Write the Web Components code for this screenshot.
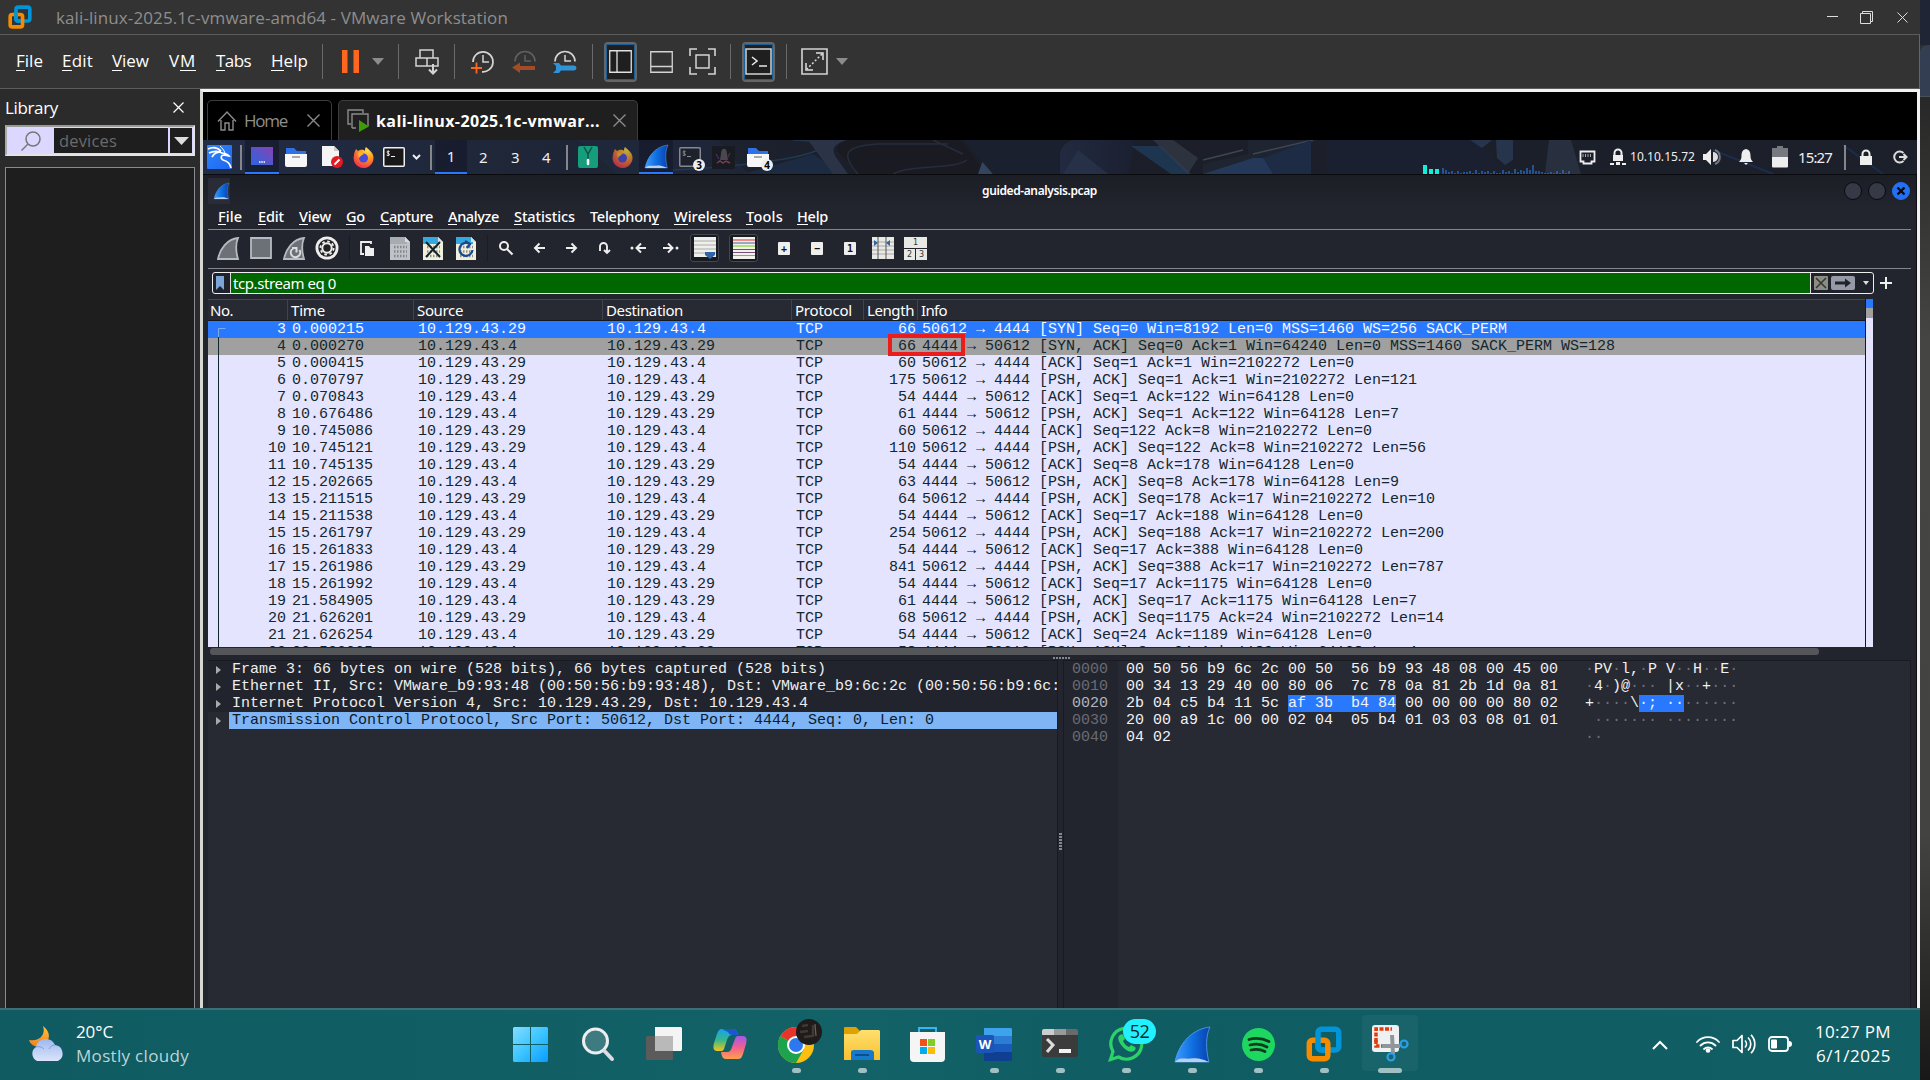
<!DOCTYPE html>
<html lang="en">
<head>
<meta charset="utf-8">
<title>kali-linux-2025.1c-vmware-amd64 - VMware Workstation</title>
<style>
html,body{margin:0;height:1080px;overflow:hidden;background:#303030}
</style>
</head>
<body>
<desktop-screen></desktop-screen>
<script>
const BASE = `*{box-sizing:border-box}svg{display:block;overflow:visible}u{text-decoration:none;background:linear-gradient(currentColor,currentColor) 0 calc(100% - 1px)/100% 1px no-repeat}`;
const fitted = [];

/* A single line of text, tracked so that it fills the width given in "w". */
class UiText extends HTMLElement {
  connectedCallback() {
    if (!this.shadowRoot) {
      this.attachShadow({ mode: 'open' }).innerHTML =
        `<style>:host{display:block;white-space:pre;flex:none}span{display:inline-block}</style><span><slot></slot></span>`;
      fitted.push(this);
    }
  }
  fit() {
    const w = +this.getAttribute('w');
    if (!w) return;
    const s = this.shadowRoot.querySelector('span');
    const n = this.textContent.length;
    s.style.letterSpacing = ((w - s.getBoundingClientRect().width) / n) + 'px';
  }
}
customElements.define('ui-text', UiText);

function define(name, css, html) {
  customElements.define(name, class extends HTMLElement {
    connectedCallback() {
      if (this.shadowRoot) return;
      this.attachShadow({ mode: 'open' }).innerHTML =
        `<style>${BASE}${css}</style>${typeof html === 'function' ? html(this) : html}`;
    }
  });
}

/* Flow items one after another; each entry is [left, width, markup, extra style]. */
function strip(start, items) {
  let end = start;
  return items.map(([x, w, h, st]) => {
    const m = x - end; end = x + w;
    return `<div class="i" style="flex:none;margin-left:${m}px;width:${w}px;${st || ''}">${h}</div>`;
  }).join('');
}
const txt = (s, w, st) => `<ui-text w="${w}" style="${st || ''}">${s}</ui-text>`;
const svg = (w, h, b, vb) => `<svg width="${w}" height="${h}" viewBox="${vb || `0 0 ${w} ${h}`}" fill="none" preserveAspectRatio="none">${b}</svg>`;

const G = {
  vmware: (w, h) => svg(w, h, `<path d="M14 3h13a3 3 0 0 1 3 3v13a3 3 0 0 1-3 3H14a3 3 0 0 1-3-3V6a3 3 0 0 1 3-3z" stroke="#0095d9" stroke-width="5"/><path d="M11 16v-3H6a3 3 0 0 0-3 3v11a3 3 0 0 0 3 3h11a3 3 0 0 0 3-3V16a3 3 0 0 0-3-3h-6" stroke="#f78b00" stroke-width="5"/><path d="M11 10v9a3 3 0 0 0 3 3h3" stroke="#0095d9" stroke-width="5"/>`, '0 0 33 33'),
  fin: (w, h) => svg(w, h, `<defs><linearGradient id="f" x1="0" x2="1"><stop stop-color="#3d9bff"/><stop offset=".5" stop-color="#0f6fe0"/><stop offset="1" stop-color="#0a3fb0"/></linearGradient></defs><path d="M0 32C3 17 14 2 32 0c-4 8-4 20-1 32z" fill="url(#f)" stroke="#58a6f2" stroke-width=".7"/><path d="M0 32c3-4 8-3 12-3s8-2 19 3z" fill="#b9cff0"/>`, '0 0 32 32'),
  folder: svg(22, 20, `<path d="M1 1h8l3 3h9v6H1z" fill="#2f6fe8"/><path d="M0 7h22v11a2 2 0 0 1-2 2H2a2 2 0 0 1-2-2z" fill="#f7f7f7"/><path d="M7 10h8" stroke="#aaa" stroke-width="2"/>`),
  firefox: svg(21, 22, `<defs><radialGradient id="q" cx=".7" cy=".15" r=".9"><stop stop-color="#ffe14a"/><stop offset=".45" stop-color="#ff9a1f"/><stop offset="1" stop-color="#f2304f"/></radialGradient></defs><path d="M1 9C1 7 2 5 3 3l2 2c2-1 5-2 7 0 0-2 0-3 1-4 2 2 7 5 7.500 10A10 10 0 1 1 1 9z" fill="url(#q)"/><circle cx="10.500" cy="12" r="4.500" fill="#4a4bd8"/><path d="M5 7c2-1 4 0 6 1-2 1-4 2-5 4z" fill="#ffb52c"/>`),
  term: (c, bg) => svg(22, 20, `<rect x=".75" y=".75" width="20.500" height="18.500" rx="1" fill="${bg}" stroke="${c}" stroke-width="1.500"/><path d="M6.500 4.500c-1.500-.8-3 0-2.500 1s2.500.8 2.500 2-1.500 1.500-2.800.6M5.200 3.500v5.500M8 9.500h4" stroke="${c}" stroke-width="1"/>`),
  sepk: `<div style="width:2px;height:25px;background:#85868c"></div>`,
  clock: (extra, op) => svg(25, 24, `<g opacity="${op || 1}"><path d="M3 12a10 10 0 1 1 9 9.800" stroke="#d4d4d4" stroke-width="1.700"/><path d="M13 5v7h6" stroke="#d4d4d4" stroke-width="1.500"/></g>${extra}`),
  clockTop: (extra, c) => svg(26, 24, `<path d="M3 11.500a10 10 0 0 1 20 0" stroke="${c}" stroke-width="1.700"/><path d="M13 5v6h6" stroke="${c}" stroke-width="1.500"/>${extra}`),
  caret: svg(12, 7, `<path d="M0 0h12L6 7z" fill="#8c8c8c"/>`),
  x: (s, c, k) => svg(s, s, `<path d="M.5.5l${s - 1} ${s - 1}M${s - .5}.5l-${s - 1} ${s - 1}" stroke="${c}" stroke-width="${k || 1.2}"/>`),
  sepv: `<div style="width:1px;height:35px;background:#6a6a6a"></div>`
};

/* ---------- VMware window frame ---------- */
define('vm-titlebar', `:host{display:flex;align-items:center;height:35px;background:#333;border-bottom:1px solid #5c5c5c;font:17px "Open Sans","Noto Sans",sans-serif;color:#8e8e8e}`,
  strip(0, [
    [8, 24, G.vmware(24, 24)],
    [56, 452, txt('kali-linux-2025.1c-vmware-amd64 - VMware Workstation', 452)],
    [1827, 11, svg(11, 11, `<path d="M0 4.500h11" stroke="#ddd"/>`)],
    [1860, 13, svg(13, 13, `<path d="M.5 2.500h10v10H.5zM2.500 2V.5h10v10H11" stroke="#ddd"/>`)],
    [1897, 11, G.x(11, '#ddd', 1)]
  ]));

define('vm-toolbar', `:host{display:flex;align-items:center;height:54px;background:#333;border-bottom:1px solid #5c5c5c;border-right:1px solid #666;font:17px "Open Sans","Noto Sans",sans-serif;color:#fff}
ui-text{margin-top:-2px}
.on{width:33px;height:40px;border:2px solid #666;border-radius:4px;background:#1f1f1f;outline:1px solid #19609a;outline-offset:-3px;display:flex;align-items:center;justify-content:center}`,
  strip(0, [
    [16, 27, txt('<u>F</u>ile', 27)], [62, 31, txt('<u>E</u>dit', 31)], [112, 37, txt('<u>V</u>iew', 37)],
    [169, 27, txt('V<u>M</u>', 27)], [216, 35, txt('<u>T</u>abs', 35)], [271, 37, txt('<u>H</u>elp', 37)],
    [322, 1, G.sepv],
    [342, 17, svg(17, 23, `<path d="M0 0h5.500v23H0zM11.500 0H17v23h-5.500z" fill="#ff671f"/>`)],
    [372, 12, G.caret], [398, 1, G.sepv],
    [415, 24, svg(24, 26, `<path d="M5 1h13v8H5zM1 9h11v8H1zM12 9h11v8H12z" stroke="#d4d4d4" stroke-width="1.500"/><path d="M18 15v9M14 20.500l4 4 4-4" stroke="#d4d4d4" stroke-width="2"/>`)],
    [454, 1, G.sepv],
    [470, 25, G.clock(`<path d="M1 18h11M6.500 12.500v11" stroke="#ff671f" stroke-width="1.800"/>`)],
    [512, 26, G.clockTop(`<path d="M0 17.500l8-5v3.500h15v4H8v3z" fill="#a04c26"/>`, '#606060')],
    [552, 26, G.clockTop(`<path d="M1 13h6l2 2.500h13a2.500 2.500 0 0 1 0 5H9L7 23H1l3-3v-4z" fill="#2f93d8"/>`, '#d4d4d4')],
    [592, 1, G.sepv],
    [604, 33, `<div class="on">${svg(23, 23, `<path d="M.75.75h21.500v21.500H.75zM8 1v21" stroke="#e0e0e0" stroke-width="1.300"/>`)}</div>`],
    [650, 23, svg(23, 22, `<path d="M.75.75h21.500v20.500H.75zM1 15.500h21" stroke="#d4d4d4" stroke-width="1.300"/>`)],
    [689, 27, svg(27, 27, `<path d="M1 8V1h7M19 1h7v7M26 19v7h-7M8 26H1v-7" stroke="#d4d4d4" stroke-width="1.600"/><path d="M7 7h13v13H7z" stroke="#d4d4d4" stroke-width="1.500"/>`)],
    [730, 1, G.sepv],
    [742, 33, `<div class="on">${svg(27, 27, `<path d="M1 1h25v25H1z" stroke="#d4d4d4" stroke-width="1.500"/><path d="M7 9l5 4-5 4M14 18h8" stroke="#e8e8e8" stroke-width="1.600"/>`)}</div>`],
    [786, 1, G.sepv],
    [801, 27, svg(27, 27, `<path d="M1 1h25v25H1z" stroke="#d4d4d4" stroke-width="1.600"/><path d="M15 5h7v7M5 15v7h7" stroke="#e0e0e0" stroke-width="1.500"/><path d="M21 6L6 21" stroke="#e0e0e0" stroke-width="1.500" stroke-dasharray="2 2"/>`)],
    [836, 12, G.caret]
  ]));

define('vm-library', `:host{display:flex;flex-direction:column;width:200px;flex:none;background:#2b2b2b;padding:1px 0 0 5px;font:17px "Open Sans","Noto Sans",sans-serif;color:#fff;overflow:hidden}
.h{display:flex;align-items:center;height:35px}
.s{display:flex;width:190px;height:31px;border:2px solid #e4e4e4;border-top-color:#999;border-left-color:#aaa;background:#dbd7ff;align-items:stretch;flex:none;padding:1px}
.in{width:114px;margin-left:46px;background:#1e1e1e;color:#6b6b6b;padding-left:5px;line-height:25px;font-size:16.500px;display:flex}
.ic{width:46px;margin-right:-46px;display:flex;align-items:center;justify-content:center}
.dd{width:22px;margin-left:2px;background:#1e1e1e;display:flex;align-items:center;justify-content:center}
.b{margin-top:11px;width:190px;flex:1;border:1px solid #8a8a90;border-bottom:0;background:#1e1e1e}`,
  `<div class="h">${strip(5, [[5, 53, txt('Library', 53)], [173, 11, G.x(11, '#fff', 1.2)]])}</div>
   <div class="s"><div class="ic">${svg(20, 20, `<circle cx="12" cy="8" r="7" stroke="#777" stroke-width="1.500"/><path d="M7 13l-6.500 6.500" stroke="#777" stroke-width="1.500"/>`)}</div>
   <div class="in">${txt('devices', 58)}</div><div class="dd">${svg(15, 8, `<path d="M0 0h15L7.500 8z" fill="#ddd"/>`)}</div></div><div class="b"></div>`);

define('vm-tabs', `:host{display:flex;height:48px;background:#000;align-items:flex-end;font:17px "Open Sans","Noto Sans",sans-serif;flex:none}
.t{display:flex;align-items:center;height:40px;border:1px solid #3c3c3c;border-bottom:0;border-radius:5px 5px 0 0;color:#8e8e8e;flex:none}
.a{background:#1f1f1f;color:#fff;font-weight:700;margin-left:6px;font-size:16px}`,
  `<div class="t" style="margin-left:4px;width:125px">${strip(208, [[217, 20, svg(20, 20, `<path d="M1 10.500L10 1l9 9.500M4 9v10h4v-7h4v7h4V9" stroke="#8c8c8c" stroke-width="1.400"/>`)], [244, 43, txt('Home', 43)], [307, 13, G.x(13, '#8c8c8c', 1.4)]])}</div>
   <div class="t a" style="width:300px">${strip(339, [[347, 22, svg(22, 23, `<path d="M4 15H1V1h15v3M5 19V5h16v12M5 19h4" stroke="#8c8c8c" stroke-width="1.400"/><path d="M12 11l10 6.500L12 23z" fill="#3f9b0b"/>`)], [376, 224, txt('kali-linux-2025.1c-vmwar...', 224)], [613, 13, G.x(13, '#8c8c8c', 1.4)]])}</div>`);

/* ---------- Kali top panel ---------- */
const badge = n => `<div class="bg">${n}</div>`;
const bars = (() => {
  let p = '';
  const hs = [6, 4, 2, 3, 1, 3, 1, 2, 2, 3, 1, 4, 1, 3, 2, 3, 1, 3, 1, 1, 4, 2, 3, 1, 5, 2, 4, 3, 6, 4, 9, 3, 3, 2, 1, 1, 2, 1, 3, 1, 4, 1, 3];
  hs.forEach((h, i) => p += `M${i * 3 + 20} 9v-${h}`);
  return svg(147, 9, `<path d="${p}" stroke="#2d86ff" stroke-width="1"/><path d="M0 0h4v9H0zM6 4h4v5H6zM12 4h4v5h-4z" fill="#12efd8"/>`);
})();
define('kali-panel', `:host{display:flex;position:relative;height:35px;align-items:center;background:#1c2130;font:15px "Noto Sans",sans-serif;color:#eee;flex:none;overflow:hidden;border-bottom:1px solid #0a0b0f}
.i{position:relative;z-index:1}.wall{position:absolute;inset:0}
.tile{height:34px;display:flex;align-items:center;justify-content:center;background:rgba(20,24,40,.65);border-bottom:2px solid #2979ff}
.bg{position:absolute;right:-4px;bottom:-4px;width:12px;height:12px;border-radius:6px;background:#eee;color:#000;font:bold 10px/12px "Noto Sans",sans-serif;text-align:center}`,
  `<div class="wall">${svg(1714, 34, `<defs><linearGradient id="w" x1="0" x2="1"><stop stop-color="#222c45"/><stop offset=".25" stop-color="#1d2433"/><stop offset=".4" stop-color="#1b1e28"/><stop offset="1" stop-color="#1c202b"/></linearGradient><linearGradient id="w2"><stop stop-color="#212a40"/><stop offset="1" stop-color="#1b2030"/></linearGradient></defs>
  <path d="M0 0h1714v34H0z" fill="url(#w)"/><path d="M375 0h140l30 34H415z" fill="#252f4a" opacity=".35"/>
  <path d="M470 30c50-2 120-10 140-18s0-12-20-12" stroke="#1f3a50" stroke-width="1.500"/><path d="M540 34l70-20 30 20z" fill="#1c2a42"/>
  <path d="M605 0h40c-15 4-18 9-10 20l10 14h-15z" fill="#2a3446"/><path d="M648 0h110l25 34H655l-20-22c-3-6 3-12 13-12z" fill="#1a1b22"/><path d="M655 34c-20-22-10-28 20-30h70M730 0l30 14M690 34c20-10 60-4 74-14" stroke="#252d3b" stroke-width="1.500"/>
  <path d="M775 34l5-14 10 14z" fill="#33455e"/><path d="M760 0h110l-14 22v12h-66z" fill="#1b202e"/>
  <path d="M857 34V14Q860 1 872 0h60l-6 34z" fill="url(#w2)"/><path d="M875 10l30 24h-45z" fill="#2c3750" opacity=".6"/>
  <path d="M928 6l40 28h20l-30-28z" fill="#1e3550"/><path d="M950 0h20l25 18-10 16z" fill="#38404d" opacity=".6"/><path d="M1000 24l45-10V0h70l-30 14-85 20z" fill="#1f2530"/><path d="M1000 20l40-10M1050 14l60-14" stroke="#3d4654" stroke-width="1.500"/>
  <path d="M1000 34l50-16h10l20 16z" fill="#24395a"/><path d="M1060 18l48-18v34h-38z" fill="#1d2b44"/><path d="M1124 0h150l30 34h-180z" fill="#1b2031"/>
  <path d="M1267 0h22l-10 8zM1293 0h17v20l-8 5-8-7z" fill="#26354b"/><path d="M1346 0h22l10 34h-36z" fill="#28303f"/><path d="M1510 10l60 24M1640 5l40 29" stroke="#1b2d4a" stroke-width="2"/>`)}</div>` +
  strip(203, [
    [207, 25, svg(25, 24, `<defs><linearGradient id="k" x2="1" y2="1"><stop stop-color="#2d86ff"/><stop offset="1" stop-color="#1f66ee"/></linearGradient></defs><rect width="25" height="24" rx="1" fill="url(#k)"/><path d="M1 4c5-2.500 9-2 13 2M2 8c4-2 8-2 12-1M5 12c2-4 7-6 10-4 3 1 5 0 7 3l-5-1c-3 0-4 3-1 5 4 1 7 3 8 8" stroke="#fff" stroke-width="1.700"/><path d="M13 1c2 2 4 4 5 7" stroke="#fff" stroke-width="1"/>`)],
    [240, 2, G.sepk],
    [245, 34, `<div class="tile">${svg(22, 18, `<defs><linearGradient id="t" x1="0" x2="1" y1="1" y2="0"><stop stop-color="#2a66e0"/><stop offset="1" stop-color="#8742b4"/></linearGradient></defs><rect width="22" height="18" fill="url(#t)"/><path d="M8 15h6" stroke="#fff" stroke-width="1.500" stroke-dasharray="1.500 .8"/>`)}</div>`],
    [285, 22, G.folder],
    [322, 21, svg(21, 22, `<path d="M0 0h12l5 5v15H0z" fill="#f4f4f4"/><path d="M12 0v5h5" fill="#ccc"/><circle cx="15" cy="16" r="6" fill="#e01b24"/><path d="M12.500 18.500l5-5" stroke="#fff" stroke-width="2"/>`)],
    [353, 21, G.firefox], [383, 22, G.term('#f0f0f0', '#181818')],
    [412, 9, svg(9, 6, `<path d="M1 1l3.500 3.500L8 1" stroke="#eee" stroke-width="2"/>`)],
    [430, 2, G.sepk],
    [435, 32, `<div class="tile">1</div>`], [479, 9, '2'], [511, 9, '3'], [542, 9, '4'],
    [566, 2, G.sepk],
    [578, 20, svg(20, 22, `<rect width="20" height="22" rx="2" fill="#169d7c"/><path d="M6 1l4 7 4-7M10 8v7" stroke="#0b5544" stroke-width="1.500"/><path d="M10 14v4" stroke="#fff" stroke-width="2.500" stroke-linecap="round"/>`)],
    [612, 21, `<div style="opacity:.72">${G.firefox}</div>`],
    [639, 34, `<div class="tile">${G.fin(23, 23)}</div>`],
    [679, 22, G.term('#85888f', '#1d212c') + badge(3)],
    [712, 23, svg(23, 23, `<path d="M0 0h23v23H0z" fill="#191b22"/><path d="M9 8c0-7 6-7 6 0l1 6H8z" fill="#4a474f"/><path d="M4 8l3 5M18 7l-3 6" stroke="#4a3158" stroke-width="1.200"/><path d="M5 17l3-2 3 2 3-2 4 2" stroke="#7c3d52" stroke-width="1.500"/>`)],
    [747, 22, G.folder + badge(4)],
    [1423, 147, bars, 'align-self:flex-end'],
    [1579, 17, svg(17, 15, `<path d="M1.500 1.500h14v10h-3v2h-8v-2h-3z" stroke="#eee" stroke-width="1.800"/><path d="M4 4v3M6.500 4v3M9 4v3M11.500 4v3" stroke="#aaa"/>`)],
    [1610, 16, svg(16, 17, `<path d="M4.500 6V4a3.500 3.500 0 0 1 7 0v2" stroke="#eee" stroke-width="2"/><path d="M3 6h10v6H3zM0 14h4v2H0zM12 14h4v2h-4zM6 13h4v3H6z" fill="#eee"/>`)],
    [1630, 65, txt('10.10.15.72', 65, 'font-size:12px;margin-top:-2px')],
    [1703, 17, svg(17, 16, `<path d="M0 5h3l5-5v16l-5-5H0z" fill="#eee"/><path d="M10 3a5 5 0 0 1 0 10z" fill="#ddd"/><path d="M12 1a7.500 7.500 0 0 1 0 14" stroke="#73757b" stroke-width="2"/>`)],
    [1739, 14, svg(14, 16, `<path d="M7 0c4 1 4.500 4 4.500 7 0 3 1 4 2.500 6H0c1.500-2 2.500-3 2.500-6 0-3 .5-6 4.500-7zM5 14h4l-2 2z" fill="#eee"/>`)],
    [1772, 16, svg(16, 22, `<path d="M5 0h6v2h5v9H0V2h5z" fill="#777980"/><path d="M0 11h16v9.500q0 1-1 1H1q-1 0-1-1z" fill="#eee"/>`)],
    [1798, 34, txt('15:27', 34, 'font-size:15px;margin-top:-1px')],
    [1844, 2, G.sepk],
    [1859, 14, svg(14, 16, `<path d="M3.500 8V5a3.500 3.500 0 0 1 7 0v3" stroke="#eee" stroke-width="2"/><path d="M1 7h12v9H1z" fill="#eee"/>`)],
    [1893, 15, svg(15, 14, `<path d="M10.500 3a5.500 5.500 0 1 0 0 8M6 7h7M10.500 4l3 3-3 3" stroke="#ddd" stroke-width="2"/>`)]
  ]));

/* ---------- Wireshark ---------- */
define('ws-titlebar', `:host{display:flex;align-items:center;height:32px;font:600 12px "Noto Sans",sans-serif;color:#fff;flex:none;background:linear-gradient(#1c1e26,#22242e)}
ui-text{margin-top:-1px}
.c{width:18px;height:18px;border-radius:9px;background:#363a46;border:1px solid #0a0b0e}.x{background:#2370f2;border-color:#2370f2;display:flex;align-items:center;justify-content:center}`,
  strip(203, [[208, 22, `<div style="padding:5px 0 3px 6px;height:26px;background:#292b36">${G.fin(15, 16)}</div>`], [982, 115, txt('guided-analysis.pcap', 115)],
    [1844, 18, '<div class="c"></div>'], [1868, 18, '<div class="c"></div>'], [1892, 18, `<div class="c x">${G.x(8, '#080a10', 2.4)}</div>`]]));

define('ws-menu', `:host{display:flex;align-items:center;height:22px;font:500 14.500px "Noto Sans",sans-serif;color:#fff;flex:none;padding-bottom:4px}`,
  strip(203, [['File', 218, 24], ['Edit', 258, 26], ['View', 299, 32], ['Go', 346, 19], ['Capture', 380, 53], ['Analyze', 448, 51], ['Statistics', 514, 61], ['Telephony', 590, 69], ['Wireless', 674, 58], ['Tools', 746, 37], ['Help', 797, 31]]
    .map(([s, x, w]) => [x, w, txt(s === 'Telephony' ? 'Telephon<u>y</u>' : `<u>${s[0]}</u>${s.slice(1)}`, w)])));

const page = (top, bg, over) => svg(20, 23, `<path d="M0 0h15l5 5v18H0z" fill="${bg}"/><path d="M0 0h15l2 2v5H0z" fill="${top}"/><path d="M15 0v5h5z" fill="#ddd"/><path d="M4 10h13M4 14.500h13M4 19h13" stroke="#6e7278" stroke-width="2.600" stroke-dasharray="1.500 1.500" opacity=".75"/>${over}`);
const W = '#eee';
const finG = o => svg(22, 23, `<path d="M1 22C3 12 10 2 21 1c-3 7-2 14 0 21z" fill="#6c7077" stroke="#b6bac2" stroke-width="1.800"/>${o}`);
const vs = `<div style="width:1px;height:26px;background:#1a1c22"></div>`;
define('ws-tools', `:host{display:flex;align-items:center;height:40px;border-top:1px solid #85868c;border-bottom:1px solid #85868c;margin:0 5px;padding-bottom:2px;flex:none}
.f{height:28px;width:29px;border:1px solid #45474f;background:#191b22;border-radius:3px;display:flex;align-items:center;justify-content:center}
.k{display:flex;width:12px;height:13px;background:#eee;border-radius:1px;color:#111;font:bold 10px/13px "DejaVu Sans Mono",monospace;justify-content:center}`,
  strip(208, [
    [217, 22, finG('')],
    [250, 22, svg(22, 22, `<path d="M1 1h20v20H1z" fill="#6c7077" stroke="#b6bac2" stroke-width="1.800"/>`)],
    [283, 22, finG(`<path d="M10 11.500a4.700 4.700 0 1 0 6.500 1.500M9 11h4.500v4.500" stroke="#ddd" stroke-width="2"/>`)],
    [315, 24, svg(24, 24, `<circle cx="12" cy="12" r="11.500" fill="#eee"/><circle cx="12" cy="12" r="8.700" fill="#222"/><circle cx="12" cy="12" r="4.700" stroke="#eee" stroke-width="2"/><circle cx="12" cy="12" r="6.600" stroke="#eee" stroke-width="1.800" stroke-dasharray="2.600 2.580"/>`)],
    [349, 1, vs],
    [360, 14, svg(14, 15, `<path d="M4 13H1V1h10v2" stroke="${W}" stroke-width="1.800"/><path d="M5 5h4l1.500 2H14v8H5z" fill="${W}"/>`)],
    [390, 20, page('#a8abb0', '#bfc2c6', '')],
    [423, 20, page('#35a8e0', '#efefdc', `<path d="M3 5l14 15M17 5L3 20" stroke="#16202a" stroke-width="2"/>`)],
    [456, 20, page('#35a8e0', '#efefdc', `<path d="M13.500 6.800a6.500 6.500 0 1 0 3 6.200M9 4l5 3-3 4" stroke="#19498e" stroke-width="2.300"/>`)],
    [487, 1, vs],
    [499, 14, svg(14, 14, `<circle cx="5" cy="5" r="4" stroke="${W}" stroke-width="2"/><path d="M8 8l5.500 5.500" stroke="${W}" stroke-width="2.200"/>`)],
    [533, 12, svg(12, 12, `<path d="M12 6H2M6.500 1.500L2 6l4.500 4.500" stroke="${W}" stroke-width="2"/>`)],
    [566, 12, svg(12, 12, `<path d="M0 6h10M5.500 1.500L10 6l-4.500 4.500" stroke="${W}" stroke-width="2"/>`)],
    [599, 12, svg(12, 12, `<path d="M1 9V4.500a3.500 3.500 0 0 1 7 0V11M5 8l3 3 3-3" stroke="${W}" stroke-width="1.900"/>`)],
    [630, 16, svg(16, 12, `<path d="M16 6H7M11 1.500L6.500 6l4.500 4.500" stroke="${W}" stroke-width="2"/><circle cx="2" cy="6" r="1.500" fill="${W}"/>`)],
    [663, 16, svg(16, 12, `<path d="M0 6h9M5 1.500L9.500 6 5 10.500" stroke="${W}" stroke-width="2"/><circle cx="14" cy="6" r="1.500" fill="${W}"/>`)],
    [690, 29, `<div class="f">${svg(22, 22, `<path d="M0 0h22v20H0z" fill="#efefec"/><path d="M0 4h22M0 8h22M0 12h22M0 16h22" stroke="#aaa"/><path d="M11 15h10v3l-5 4-5-4z" fill="#2f66a8"/>`)}</div>`],
    [729, 29, `<div class="f">${svg(22, 22, `<path d="M0 0h22v22H0z" fill="#f2f2ea"/><path d="M0 3h22" stroke="#ef2929"/><path d="M0 6h22" stroke="#3465a4"/><path d="M0 9h22" stroke="#73d216"/><path d="M0 12.500h22" stroke="#3465a4"/><path d="M0 15.500h22" stroke="#75507b"/><path d="M0 18.500h22" stroke="#c4a000"/>`)}</div>`],
    [778, 12, '<div class="k">+</div>'], [811, 12, '<div class="k">−</div>'], [844, 12, '<div class="k">1</div>'],
    [872, 22, svg(22, 22, `<path d="M0 0h22v22H0z" fill="#e8e8e4"/><path d="M0 5h22M0 9h22M0 13h22M0 17h22" stroke="#aaa"/><path d="M6 0v22M14 0v22" stroke="#555"/><path d="M2 3l4 3-4 3zM18 3l-4 3 4 3z" fill="#2f66a8"/>`)],
    [904, 23, `<div style="display:grid;grid-template:11px 11px/11px 11px;gap:1px;font:8px/11px 'DejaVu Sans',sans-serif;color:#333;text-align:center"><b style="grid-column:1/3;background:#e8e8e4;font-weight:400">1</b><b style="background:#e8e8e4;font-weight:400">2</b><b style="background:#e8e8e4;font-weight:400">3</b></div>`]
  ]));

define('ws-filter', `:host{display:flex;align-items:center;height:30px;flex:none;font:15px "Noto Sans",sans-serif;color:#fff;padding:0 0 2px 9px}
.b{display:flex;align-items:center;width:1662px;height:22px;border:1px solid #eee;border-radius:3px;background:#20222b;flex:none}
.g{width:1581px;height:20px;background:#060;border:solid #ddd;border-width:0 1px;margin-left:6px;padding-left:2px;display:flex;align-items:center;line-height:20px}`,
  `<div class="b"><div style="margin-left:3px;width:8px">${svg(8, 14, `<path d="M0 0h8v14l-4-4-4 4z" fill="#7ba5d8"/>`)}</div><div class="g">${txt('tcp.stream eq 0', 103)}</div>
   ${strip(1811, [[1814, 14, svg(14, 14, `<rect width="14" height="14" rx="1" fill="#8b8d84"/><path d="M2 2l10 10M12 2L2 12" stroke="#33352f" stroke-width="1.500"/>`)],
    [1831, 24, svg(24, 14, `<rect width="24" height="14" rx="2" fill="#9699a6"/><path d="M4 5.500h10v-3l6 4.500-6 4.500v-3H4z" fill="#20232c"/>`)], [1863, 6, svg(6, 4, `<path d="M0 0h6L3 4z" fill="#ddd"/>`)]])}</div>
   <div style="margin-left:6px">${svg(12, 12, `<path d="M6 0v12M0 6h12" stroke="#eee" stroke-width="2"/>`)}</div>`);

const A = '10.129.43.29', B = '10.129.43.4', P = '50612 → 4444', Q = '4444 → 50612';
const rows = [
  [3, '0.000215', 0, 66, '[SYN] Seq=0 Win=8192 Len=0 MSS=1460 WS=256 SACK_PERM'],
  [4, '0.000270', 1, 66, '[SYN, ACK] Seq=0 Ack=1 Win=64240 Len=0 MSS=1460 SACK_PERM WS=128'],
  [5, '0.000415', 0, 60, '[ACK] Seq=1 Ack=1 Win=2102272 Len=0'],
  [6, '0.070797', 0, 175, '[PSH, ACK] Seq=1 Ack=1 Win=2102272 Len=121'],
  [7, '0.070843', 1, 54, '[ACK] Seq=1 Ack=122 Win=64128 Len=0'],
  [8, '10.676486', 1, 61, '[PSH, ACK] Seq=1 Ack=122 Win=64128 Len=7'],
  [9, '10.745086', 0, 60, '[ACK] Seq=122 Ack=8 Win=2102272 Len=0'],
  [10, '10.745121', 0, 110, '[PSH, ACK] Seq=122 Ack=8 Win=2102272 Len=56'],
  [11, '10.745135', 1, 54, '[ACK] Seq=8 Ack=178 Win=64128 Len=0'],
  [12, '15.202665', 1, 63, '[PSH, ACK] Seq=8 Ack=178 Win=64128 Len=9'],
  [13, '15.211515', 0, 64, '[PSH, ACK] Seq=178 Ack=17 Win=2102272 Len=10'],
  [14, '15.211538', 1, 54, '[ACK] Seq=17 Ack=188 Win=64128 Len=0'],
  [15, '15.261797', 0, 254, '[PSH, ACK] Seq=188 Ack=17 Win=2102272 Len=200'],
  [16, '15.261833', 1, 54, '[ACK] Seq=17 Ack=388 Win=64128 Len=0'],
  [17, '15.261986', 0, 841, '[PSH, ACK] Seq=388 Ack=17 Win=2102272 Len=787'],
  [18, '15.261992', 1, 54, '[ACK] Seq=17 Ack=1175 Win=64128 Len=0'],
  [19, '21.584905', 1, 61, '[PSH, ACK] Seq=17 Ack=1175 Win=64128 Len=7'],
  [20, '21.626201', 0, 68, '[PSH, ACK] Seq=1175 Ack=24 Win=2102272 Len=14'],
  [21, '21.626254', 1, 54, '[ACK] Seq=24 Ack=1189 Win=64128 Len=0'],
  [22, '22.533265', 1, 58, '[PSH, ACK] Seq=24 Ack=1189 Win=64128 Len=4']
];
define('packet-list', `:host{display:flex;position:relative;height:348px;margin:0 5px;flex:none}
.m{width:1658px;height:348px;overflow:hidden;border-right:1px solid #17181e}
.g{display:grid;grid-template-columns:79px 126px 189px 189px 73px 53px 1fr}
.h{grid-template-columns:80px 126px 189px 189px 72px 54px 1fr;height:22px;background:#272a33;border-top:1px solid #45474f;border-bottom:1px solid #17181e;font:15px/21px "Noto Sans",sans-serif;color:#fff}
.h>div{border-right:1px solid #41434c;padding-left:3px;overflow:hidden}.h>div:last-child{border-right:0}
.r{height:17px;background:#e5e4ff;color:#12272e;font:15px/17px "Liberation Mono",monospace;white-space:pre}
.r>*{padding-left:5px}.r>.n{text-align:right;padding:0 1px 0 0}
.s{background:#2979ff;color:#f4f6ff}.y{background:#a0a0a0}
.mm{width:7px;height:348px;background:linear-gradient(#2979ff 9px,#a0a0a0 9px 19px,#e5e4ff 19px)}
.red{position:absolute;left:680px;top:35px;width:77px;height:22px;border:4px solid #ea1c1c}
.ln{position:absolute;left:10px;top:29px;width:7px;height:319px}`,
  `<div class="m"><div class="g h"><div style="padding:0 0 0 2px">${txt('No.', 23)}</div><div>${txt('Time', 34)}</div><div>${txt('Source', 46)}</div><div>${txt('Destination', 77)}</div><div>${txt('Protocol', 57)}</div><div>${txt('Length', 47)}</div><div>${txt('Info', 26)}</div></div>` +
  rows.map(([n, t, d, l, i], k) => `<div class="g r ${k == 0 ? 's' : k == 1 ? 'y' : ''}"><div class="n">${n}</div><div>${t}</div><div>${d ? B : A}</div><div>${d ? A : B}</div><div>TCP</div><div class="n">${l}</div><div>${(d ? Q : P) + ' ' + i}</div></div>`).join('') +
  `</div><div class="mm"></div><div class="red"></div><div class="ln">${svg(7, 319, `<path d="M.5 9V.5h7" stroke="#7fa8e8"/><path d="M.5 9v310" stroke="#12272e"/>`)}</div>`);

const tree = ['Frame 3: 66 bytes on wire (528 bits), 66 bytes captured (528 bits)', 'Ethernet II, Src: VMware_b9:93:48 (00:50:56:b9:93:48), Dst: VMware_b9:6c:2c (00:50:56:b9:6c:', 'Internet Protocol Version 4, Src: 10.129.43.29, Dst: 10.129.43.4', 'Transmission Control Protocol, Src Port: 50612, Dst Port: 4444, Seq: 0, Len: 0'];
define('detail-tree', `:host{display:block;width:850px;flex:none;background:#272933;border-right:1px solid #191b21;border-top:1px solid #191b21;font:15px/17px "Liberation Mono",monospace;color:#eee;white-space:pre}
.r{display:flex;align-items:center;height:17px;background:#22242d}.a{width:21px;padding-left:8px;flex:none}
.t{flex:1;overflow:hidden;padding-left:3px}.s{background:#272933}.s .t{background:#7fb5f5;color:#0c1a2a}`,
  tree.map((t, i) => `<div class="r ${i == 3 ? 's' : ''}"><div class="a">${svg(5, 8, `<path d="M0 0l5 4-5 4z" fill="#aaa"/>`)}</div><div class="t">${t}</div></div>`).join(''));

const hex = [
  ['0000', '00 50 56 b9 6c 2c 00 50  56 b9 93 48 08 00 45 00', '·PV·l,·P V··H··E·'],
  ['0010', '00 34 13 29 40 00 80 06  7c 78 0a 81 2b 1d 0a 81', '·4·)@··· |x··+···'],
  ['0020', '2b 04 c5 b4 11 5c <b>af 3b  b4 84</b> 00 00 00 00 80 02', '+····\\<b>·; ··</b>······'],
  ['0030', '20 00 a9 1c 00 00 02 04  05 b4 01 03 03 08 01 01', ' ······· ········'],
  ['0040', '04 02', '··']];
define('hex-view', `:host{display:block;flex:1;border-left:1px solid #191b21;border-top:1px solid #191b21;background:linear-gradient(90deg,#22252d 54px,#272933 54px);font:15px/17px "Liberation Mono",monospace;color:#f2f2f2;white-space:pre;border-right:1px solid #191b21}
.r{display:grid;grid-template-columns:54px 459px 1fr;height:17px;padding-left:8px}.o{color:#6a6c74}b{font-weight:400;background:#2979ff;display:inline-block;height:17px;vertical-align:top}i{font-style:normal;color:#6e7078}b i{color:#e8eeff}`,
  hex.map(([o, h, a]) => `<div class="r"><div class="o" ${o == '0020' ? 'style="color:#b4b6bc"' : ''}>${o}</div><div>${h}</div><div>${a.replace(/·+/g, '<i>$&</i>')}</div></div>`).join(''));

define('wireshark-window', `:host{display:flex;flex-direction:column;flex:1;min-height:0;background:#22242e;border-right:1px solid #0e0f13}
.sc{height:13px;margin:0 5px;padding-top:1px;flex:none;display:flex;align-items:flex-start}
.th{height:7px;width:1609px;margin-left:2px;border-radius:3px;background:#555659}
.dt{align-self:flex-end;margin:0 0 1px -766px}
.p{display:flex;flex:1;margin:0 5px;min-height:0}.d{width:5px;display:flex;align-items:center;justify-content:center;padding-top:14px}`,
  `<ws-titlebar></ws-titlebar><ws-menu></ws-menu><ws-tools></ws-tools><ws-filter></ws-filter><packet-list></packet-list>
   <div class="sc"><div class="th"></div><div class="dt">${svg(17, 2, `<path d="M0 1h17" stroke="#85878e" stroke-width="2" stroke-dasharray="2 1"/>`)}</div></div>
   <div class="p"><detail-tree></detail-tree><div class="d">${svg(3, 17, `<path d="M1.500 0v17" stroke="#85878e" stroke-width="3" stroke-dasharray="2 1"/>`)}</div><hex-view></hex-view></div>`);

/* ---------- Windows taskbar ---------- */
const task = {
  weather: svg(36, 36, `<defs><linearGradient id="m" x2="0" y2="1"><stop stop-color="#ffc93c"/><stop offset="1" stop-color="#f57c1e"/></linearGradient><linearGradient id="c" x2="0" y2="1"><stop stop-color="#9db8ee"/><stop offset="1" stop-color="#dbe5fb"/></linearGradient></defs><path d="M14 0c3 8-3 16-14 14 2 6 8 8 12 6 8-3 12-12 2-20z" fill="url(#m)"/><path d="M8 35a8 8 0 0 1-1-14 10 10 0 0 1 19-2 8.500 8.500 0 0 1 3 16z" fill="url(#c)"/><path d="M7 21c3-1 6 0 8 2M26 19c-3 0-5 2-6 4" stroke="#7e9edf"/>`),
  win: svg(35, 35, `<defs><linearGradient id="z" x2="1" y2="1"><stop stop-color="#86dcff"/><stop offset=".5" stop-color="#3cc5ff"/><stop offset="1" stop-color="#0a9bff"/></linearGradient></defs><path d="M1 0h16v17H0V1zM18 0h16l1 1v16H18zM0 18h17v17H1l-1-1zM18 18h17v16l-1 1H18z" fill="url(#z)"/>`),
  search: svg(32, 34, `<circle cx="13.500" cy="14" r="12" fill="#3d7b80" stroke="#eceef0" stroke-width="3"/><path d="M22.500 24l7.500 8" stroke="#dcdce2" stroke-width="4" stroke-linecap="round"/>`),
  view: svg(36, 34, `<path d="M9 0h26l1 1v22l-1 1H9z" fill="#f4f4f4"/><rect y="9" width="27" height="24" rx="1.500" fill="#5c5b5b"/><path d="M9 9h18v15H9z" fill="#b9b9b9"/>`),
  copilot: svg(34, 32, `<defs><linearGradient id="a" x2="0" y2="1"><stop stop-color="#18a0f0"/><stop offset=".5" stop-color="#35b88a"/><stop offset="1" stop-color="#f2c51b"/></linearGradient><linearGradient id="b" x2="0" y2="1"><stop stop-color="#a657e8"/><stop offset=".5" stop-color="#f0608f"/><stop offset="1" stop-color="#ffa04a"/></linearGradient></defs><path d="M9 1h11c3 0 4 2 5 6h-6c-3 0-4 2-5 5l-3 9c-1 2-2 2-4 2H4c-4 0-4-4-3-8L4 6c1-3 2-5 5-5z" fill="url(#a)"/><path d="M9 1h11c3 0 4 2 5 6h-5c-3 0-4-1-5-3z" fill="#1a56cf"/><path d="M25 31H13c-3 0-4-2-5-7h6c3 0 4-2 5-5l3-8c1-3 2-3 4-3h4c4 0 4 4 3 8l-3 10c-1 3-2 5-5 5z" fill="url(#b)"/>`),
  chrome: svg(46, 44, `<g transform="translate(0 8)"><circle cx="18" cy="18" r="18" fill="#fbbf12"/><path d="M18 18L2.400 9A18 18 0 0 0 18 36l8-14z" fill="#1da34d"/><path d="M18 18L2.400 9A18 18 0 0 1 33.600 9H18z" fill="#e5352b"/><circle cx="18" cy="18" r="9" fill="#fff"/><circle cx="18" cy="18" r="7" fill="#2d78ee"/></g><circle cx="31" cy="13" r="13" fill="#1f1b1a"/><path d="M24 7l6-1M22 13l8-1M26 18l8-1M35 6v12" stroke="#3f3835" stroke-width="2.500"/><path d="M37 5l1 12" stroke="#6a615c" stroke-width="1.200"/>`),
  folder: svg(36, 34, `<defs><linearGradient id="y" x2="0" y2="1"><stop stop-color="#ffdf70"/><stop offset="1" stop-color="#f9c12d"/></linearGradient></defs><path d="M0 1q0-1 1-1h11l4 4v6H0z" fill="#e0a100"/><path d="M0 7h13l4-4h18l1 1v29H0z" fill="url(#y)"/><path d="M7 33V25q0-2 3-2h16q3 0 4 2v8z" fill="#1779c9"/><path d="M11 28h14" stroke="#0a4d90" stroke-width="2"/>`),
  store: svg(35, 35, `<path d="M9 6V1h17v5" stroke="#35b6f2" stroke-width="2"/><path d="M0 5h35v26q0 4-4 4H4q-4 0-4-4z" fill="#f5f5f5"/><path d="M10 12h7v7h-7z" fill="#f1511b"/><path d="M18 12h7v7h-7z" fill="#80cc28"/><path d="M10 20h7v7h-7z" fill="#00adef"/><path d="M18 20h7v7h-7z" fill="#fbbc09"/>`),
  word: `<div style="position:relative">${svg(36, 33, `<path d="M8 0h27l1 1v8H8z" fill="#3fa3ec"/><path d="M8 8h28v9H8z" fill="#2b7cd3"/><path d="M8 16h28v9H8z" fill="#185abd"/><path d="M8 24h28v8l-1 1H8z" fill="#103f91"/><rect y="7" width="18" height="18" rx="1.500" fill="#1b55b8"/>`)}<span style="position:absolute;left:0;top:7px;width:18px;text-align:center;font:bold 13px/18px 'Open Sans',sans-serif;color:#fff">W</span></div>`,
  term: svg(36, 28, `<rect width="36" height="28" rx="2" fill="#3b3b3b"/><path d="M0 6V2q0-2 2-2h10v6z" fill="#ccc"/><path d="M12 0h12v6H12z" fill="#999"/><path d="M24 0h10q2 0 2 2v4H24z" fill="#6a6a6a"/><path d="M5 10l6 6-6 7" stroke="#ddd" stroke-width="3"/><path d="M17 20h12v4H17z" fill="#f2f2f2"/>`),
  wa: `<div style="position:relative">${svg(36, 36, `<path d="M2.500 33.500l2.500-8A15.500 15.500 0 1 1 10.500 31z" stroke="#2bd366" stroke-width="3.200"/><path d="M12 9c-3 2-2 6 2 11s9 7 12 5c2-2 2-3 1-4l-4-2-2 2c-3-1-5-4-6-6l2-2-2-4c0-1-2-1-3 0z" fill="#2bd366"/>`)}<span style="position:absolute;left:15px;top:-7px;width:33px;height:25px;border-radius:13px;background:#22f0ff;color:#06282c;font:18px/25px 'Open Sans',sans-serif;text-align:center;letter-spacing:-.5px">52</span></div>`,
  spot: svg(33, 33, `<circle cx="16.500" cy="16.500" r="16.500" fill="#1ed760"/><path d="M7 11.500c7-2 14-1 20 2M8 17c6-1.500 12-1 17 2M9 22c5-1 10-.5 14 1.500" stroke="#0d3b1e" stroke-width="2.800" stroke-linecap="round"/>`),
  snip: `<div class="act">${svg(36, 36, `<rect width="27" height="27" rx="3" fill="#eef0f2"/><path d="M4 17V4h16" stroke="#e03c0d" stroke-width="3.500" stroke-dasharray="4 1.500"/><path d="M4 15v6h6" stroke="#e03c0d" stroke-width="3.500" stroke-dasharray="4 1.500"/><path d="M20 10l1 19M10 21h18" stroke="#8f979c" stroke-width="4"/><circle cx="32" cy="19" r="3.500" stroke="#2ba0ea" stroke-width="2.200"/><circle cx="19" cy="32" r="3.500" stroke="#2ba0ea" stroke-width="2.200"/>`)}</div>`
};
const app = (i, dot) => `<div class="app"><div class="ic">${i}</div>${dot ? `<div class="dot" style="width:${dot}px"></div>` : ''}</div>`;
define('win-taskbar', `:host{display:flex;height:72px;width:1920px;background:linear-gradient(90deg,#0f5b61,#126267 45%,#0f5c62 60%,#115f65);border-top:2px solid #3d6f74;font:17px "Open Sans","Noto Sans",sans-serif;color:#fff}
.i{align-self:stretch;display:flex;align-items:center}
.app{display:flex;flex-direction:column;align-items:center;width:100%;height:100%}.ic{height:57px;display:flex;align-items:center;justify-content:center;padding-top:11px}
.dot{height:5px;border-radius:3px;background:#a0c0c3;margin-top:1px}
.act{padding:10px;margin-top:-2px;background:#18646a;border-radius:4px;height:56px;width:56px}
.two{display:flex;flex-direction:column;line-height:24px}`,
  strip(0, [
    [29, 36, `<div style="padding-bottom:3px">${task.weather}</div>`],
    [76, 114, `<div class="two" style="padding-bottom:2px">${txt('20°C', 37)}${txt('Mostly cloudy', 113, 'color:#bdd5d6')}</div>`],
    [513, 35, app(task.win)], [582, 32, app(task.search)], [646, 36, app(task.view)], [713, 34, app(task.copilot)],
    [778, 36, `<div class="app"><div class="ic" style="padding:4px 0 0 10px">${task.chrome}</div><div class="dot" style="width:9px"></div></div>`],
    [844, 36, app(task.folder, 9)], [910, 35, app(task.store)], [976, 36, app(task.word, 9)],
    [1042, 36, app(`<div style="padding-bottom:2px">${task.term}</div>`, 9)], [1108, 36, app(task.wa, 9)], [1174, 36, app(G.fin(35, 35), 9)], [1242, 33, app(task.spot, 9)],
    [1306, 36, app(G.vmware(36, 36), 9)], [1362, 56, app(task.snip, 24)],
    [1652, 16, svg(16, 9, `<path d="M1 8l7-7 7 7" stroke="#fff" stroke-width="2"/>`)],
    [1696, 24, svg(24, 18, `<path d="M1 7a15 15 0 0 1 22 0M4.500 10.500a10.500 10.500 0 0 1 15 0M8 14a6 6 0 0 1 8 0" stroke="#fff" stroke-width="1.800" stroke-linecap="round"/><circle cx="12" cy="15.500" r="2.300" fill="#fff"/>`), 'padding-bottom:2px'],
    [1732, 24, svg(24, 20, `<path d="M1 6.500h4l5-5v17l-5-5H1z" stroke="#fff" stroke-width="1.700" stroke-linejoin="round"/><path d="M13 6.500a5 5 0 0 1 0 7M16 3.500a9 9 0 0 1 0 13M19 .8a13 13 0 0 1 0 18.400" stroke="#fff" stroke-width="1.700"/>`), 'padding-bottom:2px'],
    [1768, 24, svg(24, 16, `<rect x="1" y="1" width="19" height="14" rx="3" stroke="#fff" stroke-width="1.800"/><rect x="3" y="3.500" width="6" height="9" rx="1" fill="#fff"/><path d="M21 5q3 0 3 3t-3 3z" fill="#fff"/>`), 'padding-bottom:2px'],
    [1815, 77, `<div class="two" style="padding-bottom:2px">${txt('10:27 PM', 76)}${txt('6/1/2025', 75, 'margin-left:1px')}</div>`]
  ]));

define('desktop-screen', `:host{display:flex;width:1930px;height:1080px;overflow:hidden}
.w{display:flex;flex-direction:column;width:1920px;flex:none}
.m{display:flex;flex:1;min-height:0}
.g{display:flex;flex-direction:column;flex:1;border:solid #f2f2f2;border-width:3px 3px 0 3px;border-left-color:#d6d6d2;background:#000;min-width:0}
.e{display:flex;flex-direction:column;width:10px}`,
  `<div class="w"><vm-titlebar></vm-titlebar><vm-toolbar></vm-toolbar>
   <div class="m"><vm-library></vm-library><div class="g"><vm-tabs></vm-tabs><kali-panel></kali-panel><wireshark-window></wireshark-window></div></div>
   <win-taskbar></win-taskbar></div>
   <div class="e"><div style="height:45px;background:#1f2535"></div><div style="height:52px;background:#333e53;border-radius:8px 0 0 0;border-bottom:1px solid #4a4f58"></div><div style="flex:1;background:linear-gradient(#282828,#454543 25%,#434341 75%,#181818)"></div></div>`);

fitted.forEach(t => t.fit());
</script>
</body>
</html>
